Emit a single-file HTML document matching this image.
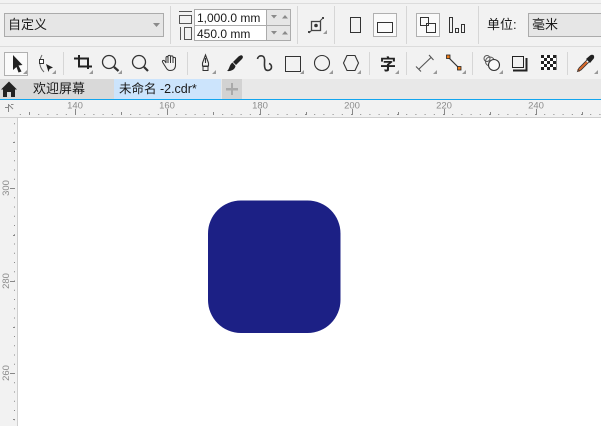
<!DOCTYPE html>
<html><head><meta charset="utf-8"><style>
html,body{margin:0;padding:0;background:#fff;overflow:hidden}
svg{display:block}
text{font-family:"Liberation Sans","Noto Sans CJK SC",sans-serif}
</style></head><body>
<svg width="601" height="426" viewBox="0 0 601 426" xmlns="http://www.w3.org/2000/svg">
<rect width="601" height="426" fill="#fff"/>
<rect width="601" height="79" fill="#f2f2f2"/>
<g shape-rendering="crispEdges">
<rect y="3" width="601" height="1" fill="#dcdcdc"/>
<rect y="46" width="601" height="1" fill="#dcdcdc"/>
<!-- separators -->
<g fill="#d6d6d6">
<rect x="170" y="6" width="1" height="38"/><rect x="297" y="6" width="1" height="38"/><rect x="334" y="6" width="1" height="38"/><rect x="406" y="6" width="1" height="38"/><rect x="478" y="6" width="1" height="38"/>
<rect x="63" y="52" width="1" height="23"/><rect x="187" y="52" width="1" height="23"/><rect x="369" y="52" width="1" height="23"/><rect x="406" y="52" width="1" height="23"/><rect x="472" y="52" width="1" height="23"/><rect x="567" y="52" width="1" height="23"/>
</g>
<!-- combos -->
<rect x="4.5" y="13.5" width="159" height="23" fill="#e6e6e6" stroke="#ababab"/>
<rect x="528.5" y="13.5" width="80" height="23" fill="#e6e6e6" stroke="#ababab"/>
<!-- inputs -->
<rect x="194.5" y="9.5" width="96" height="31" fill="#e6e6e6" stroke="#ababab"/>
<rect x="195" y="10" width="71" height="30" fill="#fff"/>
<rect x="266" y="10" width="1" height="30" fill="#ababab"/>
<rect x="195" y="25" width="95" height="1" fill="#ababab"/>
<!-- buttons -->
<rect x="373.5" y="13.5" width="23" height="23" fill="#fafafa" stroke="#b0b0b0"/>
<rect x="416.5" y="13.5" width="23" height="23" fill="#fafafa" stroke="#b0b0b0"/>
<rect x="4.5" y="52.5" width="23" height="23" fill="#fafafa" stroke="#b0b0b0"/>
<!-- tab bar -->
<rect y="79" width="601" height="20" fill="#e8e8e8"/>
<rect y="79" width="114" height="20" fill="#d9d9d9"/>
<rect x="114" y="79" width="107" height="20" fill="#cce4fc"/>
<rect x="222" y="79" width="20" height="20" fill="#d2d2d2"/>
<rect y="99" width="601" height="1" fill="#12a5ee"/>
<!-- ruler -->
<rect y="100" width="601" height="18" fill="#f2f2f2"/>
<rect y="100" width="18" height="326" fill="#f2f2f2"/>
<rect y="117" width="601" height="1" fill="#cfcfcf"/>
<rect x="17" y="117" width="1" height="309" fill="#cfcfcf"/>
<rect x="18" y="118" width="583" height="308" fill="#fff"/>
<!-- plus -->
<rect x="226" y="88" width="12" height="2.4" fill="#a9a9a9"/><rect x="230.8" y="83" width="2.4" height="12" fill="#a9a9a9"/>
</g>
<!-- ruler ticks -->
<line x1="19.8" y1="114.5" x2="601" y2="114.5" stroke="#8a8a8a" stroke-dasharray="1 8.2"/>
<line x1="14.5" y1="123.2" x2="14.5" y2="426" stroke="#8a8a8a" stroke-dasharray="1 8.25"/>
<g stroke="#888" stroke-width="1" shape-rendering="crispEdges">
<path d="M75.5 109V115M167.5 109V115M260.5 109V115M352.5 109V115M444.5 109V115M536.5 109V115"/>
<path d="M29.5 112V115M121.5 112V115M213.5 112V115M306.5 112V115M398.5 112V115M490.5 112V115M582.5 112V115"/>
<path d="M10 188.5H15M10 281.5H15M10 373.5H15"/>
<path d="M13 142.5H15M13 235.5H15M13 327.5H15M13 419.5H15"/>
</g>
<g font-size="9.5" fill="#8c8c8c" text-anchor="middle">
<text x="75" y="108.500">140</text><text x="167" y="108.500">160</text><text x="260" y="108.500">180</text><text x="352" y="108.500">200</text><text x="444" y="108.500">220</text><text x="536" y="108.500">240</text>
<text transform="translate(9 188) rotate(-90)">300</text>
<text transform="translate(9 281) rotate(-90)">280</text>
<text transform="translate(9 373) rotate(-90)">260</text>
</g>
<!-- ruler corner -->
<g stroke="#888" fill="none" stroke-width="1"><path d="M8.5 104V112M5 107.5H9M9 105L13 109M11 104.5H13.5"/></g>
<!-- shape -->
<rect x="208" y="200.5" width="132.5" height="132.5" rx="33" ry="33" fill="#1c2085"/>
<!-- text -->
<g fill="#1a1a1a">
<text x="8" y="29" font-size="13">自定义</text>
<text x="197" y="22" font-size="12">1,000.0 mm</text>
<text x="197" y="38" font-size="12">450.0 mm</text>
<text x="487" y="29" font-size="13">单位:</text>
<text x="532" y="29" font-size="13">毫米</text>
<text x="33" y="93" font-size="13">欢迎屏幕</text>
<text x="119" y="93" font-size="12.5">未命名 -2.cdr*</text>
</g>
<text x="380" y="70" font-size="16" font-weight="700" fill="#222">字</text>
<!-- arrows -->
<g fill="#8a8a8a">
<path d="M153 23h7l-3.500 4zM271 15h6l-3 3.500zM282 18.500h6l-3-3.500zM271 31h6l-3 3.500zM282 34.500h6l-3-3.500z"/>
</g>
<!-- size icons -->
<g fill="none" stroke="#555" shape-rendering="crispEdges">
<rect x="179.500" y="15.500" width="12" height="8"/>
<path d="M179 11.500H192"/>
<rect x="184.500" y="27.500" width="7" height="12"/>
<path d="M180.500 27V40"/>
</g>
<!-- page icons -->
<g fill="none" stroke="#333" shape-rendering="crispEdges">
<rect x="350.500" y="17.500" width="10" height="15"/>
<rect x="377.500" y="22.500" width="15" height="10"/>
<rect x="420.500" y="17.500" width="8" height="8"/>
<rect x="426.500" y="23.500" width="9" height="9"/>
<rect x="449.500" y="17.500" width="3" height="15"/>
<rect x="455.500" y="28.500" width="3" height="4"/>
<rect x="461.500" y="24.500" width="3" height="8"/>
</g>
<!-- layout-origin icon -->
<g fill="none" stroke="#444">
<rect x="311.500" y="21.500" width="9" height="9" stroke-width="1.300"/>
<path d="M309 33L312 30M320 21L323 18"/>
</g>
<circle cx="316" cy="25.500" r="1.800" fill="#333"/>
<rect x="308" y="31" width="2" height="2" fill="#444"/><rect x="322" y="17" width="2" height="2" fill="#444"/>
<!-- corner triangles -->
<g fill="#999">
<path d="M327 30v4h-4zM27 70v4h-4zM56 70v4h-4zM93 70v4h-4zM122 70v4h-4zM216 70v4h-4zM304 70v4h-4zM333 70v4h-4zM361 70v4h-4zM399 70v4h-4zM437 70v4h-4zM466 70v4h-4zM503 70v4h-4zM598 70v4h-4z"/>
</g>
<!-- pick -->
<path d="M13 55L22.500 65L18.500 65.500L21.500 71.500L18.500 72.500L16.500 67L13 70Z" fill="#222"/>
<!-- shape tool -->
<path d="M42 55C38 62 40 68 44 72" fill="none" stroke="#666" stroke-width="1"/>
<rect x="39.500" y="59.500" width="4" height="4" fill="#fff" stroke="#333"/>
<path d="M46 64L53 67.500L49.500 69L48.500 72Z" fill="#222"/>
<!-- crop -->
<path d="M74 58.500H88V69M79 55V66.500H92" fill="none" stroke="#222" stroke-width="2"/>
<!-- zooms -->
<g fill="none" stroke="#333" stroke-width="1.300">
<circle cx="109" cy="62" r="6.500"/>
<circle cx="139" cy="62" r="6.500"/>
</g>
<path d="M114 67L118.500 71M144 67L148 71" stroke="#333" stroke-width="2.200" fill="none"/>
<!-- hand -->
<path d="M165 66C163 63 161.500 61 163 60.500C164.500 60 165.500 62 166 63V58C166 56 168 56 168 58V56.500C168 55 170.500 55 170.500 56.500V57C170.500 55.500 173 55.500 173 57V58.500C173 57 175.500 57 175.500 58.500V65C175.500 69 173 70.500 170 70.500C167.500 70.500 166.500 68.500 165 66ZM168 58V63M170.500 57V63M173 58V63" fill="none" stroke="#333" stroke-width="1"/>
<!-- pen -->
<path d="M205.500 55L208.500 63V66H202.500V63ZM205.500 58V63" fill="none" stroke="#333" stroke-width="1.100"/>
<rect x="203" y="66.500" width="5" height="4" fill="none" stroke="#333"/>
<!-- brush -->
<path d="M242 55.500C243.500 56.500 243 58 241.500 59.500L236 65L233 62L238.500 56.500C240 55.500 241 55 242 55.500Z" fill="#222"/>
<path d="M232.500 62.500L235.500 66C235 69.500 231 71.500 227 71C229.500 69.500 229 65 232.500 62.500Z" fill="#222"/>
<!-- artistic curve -->
<path d="M257.500 59C258 55 264 54.500 264.500 59C265 62 263.500 66 265.500 69.500C267.500 71.500 271.500 70 271.500 67C271.500 65.500 270.500 64 269 63.500" fill="none" stroke="#333" stroke-width="1.600"/>
<!-- rect, ellipse, polygon -->
<rect x="285.500" y="56.500" width="15" height="15" fill="none" stroke="#333" stroke-width="1.100" shape-rendering="crispEdges"/>
<circle cx="322" cy="63" r="7.500" fill="none" stroke="#333" stroke-width="1.100"/>
<path d="M347 55.500H355L358.500 63L355 70.500H347L343.500 63Z" fill="none" stroke="#333" stroke-width="1.100"/>
<!-- dimension -->
<path d="M419 69L431 57.500M416 66.500L421 71.500M429 55L433.500 60" fill="none" stroke="#555" stroke-width="1.100"/>
<!-- connector -->
<path d="M448 57L459 68" stroke="#333" stroke-width="1.200"/>
<rect x="446.500" y="55" width="3.500" height="3.500" fill="#f07d1a" stroke="#222" stroke-width=".8"/>
<rect x="457.500" y="66.500" width="3.500" height="3.500" fill="#f07d1a" stroke="#222" stroke-width=".8"/>
<!-- blend -->
<g fill="none" stroke="#555" stroke-width="1"><circle cx="487" cy="58.500" r="3"/><circle cx="490" cy="61.500" r="4.500"/></g>
<circle cx="494" cy="65" r="5.500" fill="#fbfbfb" stroke="#333" stroke-width="1.100"/>
<!-- shadow -->
<g fill="none" stroke="#222" shape-rendering="crispEdges">
<rect x="512.500" y="56.500" width="11" height="11" stroke-width="1"/>
<path d="M526.500 58V70.500H513" stroke-width="1.600"/>
</g>
<!-- checker -->
<g shape-rendering="crispEdges">
<rect x="541" y="55" width="15.500" height="15" fill="#222"/>
<path d="M544 55h3v3h-3zM550 55h3v3h-3zM541 58h3v3h-3zM547 58h3v3h-3zM553 58h3v3h-3zM544 61h3v3h-3zM550 61h3v3h-3zM541 64h3v3h-3zM547 64h3v3h-3zM553 64h3v3h-3zM544 67h3v3h-3zM550 67h3v3h-3z" fill="#fff"/>
</g>
<!-- eyedropper -->
<path d="M578 71L587 62" stroke="#d9692a" stroke-width="3"/>
<path d="M577.500 71.500L579 68L588 59L590 61L581 70Z" fill="none" stroke="#333" stroke-width=".8"/>
<path d="M586 59L590 55.500C591.500 54.500 593.500 54.500 594 56C594.500 57.500 594 58.500 592.500 60L590 63Z" fill="#222"/>
<!-- home -->
<path d="M1 89.500L9 81.500L17 89.500H15V97H11V92H7V97H3V89.500Z" fill="#222"/>
</svg>
</body></html>
